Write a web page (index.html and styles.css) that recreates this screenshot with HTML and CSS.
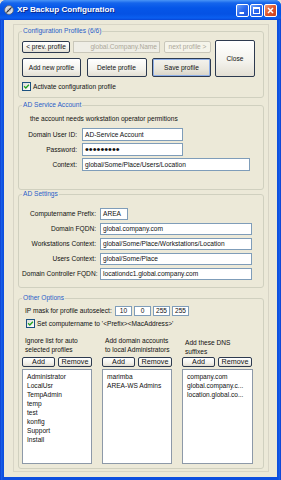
FILE: index.html
```html
<!DOCTYPE html>
<html lang="en">
    <head>
        <meta charset="UTF-8" />
        <title>XP Backup Configuration</title>
        <link rel="stylesheet" href="styles.css">
    </head>
    <body>
        <div class="window">
            <!-- title bar -->
            <div class="titlebar">
                <svg class="app-icon" viewBox="0 0 10 10" width="10" height="10">
                    <circle cx="5" cy="5" r="4.4" fill="#d9dbe0" stroke="#5d6470" stroke-width="0.8" />
                    <circle cx="5" cy="5" r="1.4" fill="#fff" stroke="#7b818c" stroke-width="0.5" />
                    <path d="M2.4 7.6 L7.6 2.4" stroke="#2b2f38" stroke-width="1.2" />
                </svg>
                <span class="title">XP Backup Configuration</span>
                <div class="caption-btns">
                    <span class="cap">
                        <svg viewBox="0 0 11 11" width="11" height="11"><rect x="2.5" y="7" width="4.5" height="2" fill="#fff" /></svg>
                    </span>
                    <span class="cap">
                        <svg viewBox="0 0 11 11" width="11" height="11"><rect x="2.5" y="2.5" width="6" height="6" fill="none" stroke="#fff" stroke-width="1" /><rect x="2" y="2" width="7" height="2" fill="#fff" /></svg>
                    </span>
                    <span class="cap cap-close">
                        <svg viewBox="0 0 11 11" width="11" height="11"><path d="M3 3 L8 8 M8 3 L3 8" stroke="#fff" stroke-width="1.5" /></svg>
                    </span>
                </div>
            </div>

            <div class="client">
                <div class="panel">
                    <!-- 프로필 -->
                    <fieldset class="group profiles">
                        <legend>Configuration Profiles (6/6)</legend>
                        <div class="profile-bar">
                            <div class="profile-rows">
                                <div class="profile-nav">
                                    <button class="btn btn-prev">&lt; prev. profile</button>
                                    <span class="field field-off">global.Company.Name</span>
                                    <button class="btn btn-next" disabled>next profile &gt;</button>
                                </div>
                                <div class="profile-actions">
                                    <button class="btn btn-add">Add new profile</button>
                                    <button class="btn btn-del">Delete profile</button>
                                    <button class="btn btn-save">Save profile</button>
                                </div>
                            </div>
                            <button class="btn btn-close">Close</button>
                        </div>
                        <label class="check check-profile">
                            <span class="check-box"><svg viewBox="0 0 7 7" width="7" height="7"><path d="M1.1 3.3 L2.8 5 L5.9 1.7" fill="none" stroke="#21a121" stroke-width="1.3" /></svg></span>
                            Activate configuration profile
                        </label>
                    </fieldset>

                    <!-- service account -->
                    <fieldset class="group account">
                        <legend>AD Service Account</legend>
                        <p class="note">the account needs workstation operator permitions</p>
                        <div class="form form-account">
                            <span class="form-label">Domain User ID:</span>
                            <span class="field w-short">AD-Service Account</span>
                            <span class="form-label">Password:</span>
                            <span class="field w-short pw">•••••••••</span>
                            <span class="form-label">Context:</span>
                            <span class="field w-ctx">global/Some/Place/Users/Location</span>
                        </div>
                    </fieldset>

                    <!-- ad settings -->
                    <fieldset class="group settings">
                        <legend>AD Settings</legend>
                        <div class="form form-settings">
                            <span class="form-label">Computername Prefix:</span>
                            <span class="field w-prefix">AREA</span>
                            <span class="form-label">Domain FQDN:</span>
                            <span class="field w-long">global.company.com</span>
                            <span class="form-label">Workstations Context:</span>
                            <span class="field w-long">global/Some/Place/Workstations/Location</span>
                            <span class="form-label">Users Context:</span>
                            <span class="field w-long">global/Some/Place</span>
                            <span class="form-label">Domain Controller FQDN:</span>
                            <span class="field w-long">locationdc1.global.company.com</span>
                        </div>
                    </fieldset>

                    <!-- other options -->
                    <fieldset class="group options">
                        <legend>Other Options</legend>
                        <div class="ip-row">
                            <span class="ip-label">IP mask for profile autoselect:</span>
                            <span class="field ip">10</span>
                            <span class="field ip">0</span>
                            <span class="field ip">255</span>
                            <span class="field ip">255</span>
                        </div>
                        <label class="check check-name">
                            <span class="check-box"><svg viewBox="0 0 7 7" width="7" height="7"><path d="M1.1 3.3 L2.8 5 L5.9 1.7" fill="none" stroke="#21a121" stroke-width="1.3" /></svg></span>
                            Set computername to '&lt;Prefix&gt;&lt;MacAddress&gt;'
                        </label>
                        <div class="lists">
                            <div class="list-col">
                                <p class="list-cap">Ignore list for auto<br>selected profiles</p>
                                <div class="list-btns">
                                    <button class="btn btn-sm">Add</button>
                                    <button class="btn btn-sm btn-rm">Remove</button>
                                </div>
                                <ul class="list">
                                    <li>Administrator</li>
                                    <li>LocalUsr</li>
                                    <li>TempAdmin</li>
                                    <li>temp</li>
                                    <li>test</li>
                                    <li>konfig</li>
                                    <li>Support</li>
                                    <li>Install</li>
                                </ul>
                            </div>
                            <div class="list-col">
                                <p class="list-cap">Add domain accounts<br>to local Administrators</p>
                                <div class="list-btns">
                                    <button class="btn btn-sm">Add</button>
                                    <button class="btn btn-sm btn-rm">Remove</button>
                                </div>
                                <ul class="list">
                                    <li>marimba</li>
                                    <li>AREA-WS Admins</li>
                                </ul>
                            </div>
                            <div class="list-col">
                                <p class="list-cap cap-low">Add these DNS<br>suffixes</p>
                                <div class="list-btns">
                                    <button class="btn btn-sm">Add</button>
                                    <button class="btn btn-sm btn-rm">Remove</button>
                                </div>
                                <ul class="list">
                                    <li>company.com</li>
                                    <li>global.company.c...</li>
                                    <li>location.global.co...</li>
                                </ul>
                            </div>
                        </div>
                    </fieldset>
                </div>
            </div>
        </div>
    </body>
</html>
```

FILE: styles.css
```css
* {
    box-sizing: border-box;
}
body {
    margin: 0;
    background: #e4e2da;
    font-family: "Liberation Sans", Arial, sans-serif;
    font-size: 6.6px;
    line-height: 8px;
    color: #111;
}
p,
ul {
    margin: 0;
    padding: 0;
}

/* 창 프레임 */
.window {
    width: 281px;
    height: 480px;
    display: flex;
    flex-direction: column;
    background: linear-gradient(90deg, #0a2fc4, #1a62ea 1px, #0d4fdf 3px, #0d4fdf 278px, #1a62ea 280px, #0a2fc4);
    border-radius: 6px 6px 0 0;
    overflow: hidden;
}
.titlebar {
    height: 20px;
    flex: none;
    display: flex;
    align-items: center;
    padding: 0 4px;
    background: linear-gradient(#4a95f6 0, #1565ec 3px, #0556e8 8px, #0552e4 14px, #0b5ff0 18px, #0746d6 20px);
}
.app-icon {
    margin-right: 3px;
    flex: none;
}
.title {
    flex: 1;
    color: #fff;
    font-weight: bold;
    font-size: 8.1px;
    text-shadow: 1px 1px #0d2a8a;
}
.caption-btns {
    display: flex;
    gap: 1px;
    margin-top: 1px;
}
.cap {
    width: 13px;
    height: 13px;
    border: 1px solid #fff;
    border-radius: 2px;
    background: linear-gradient(135deg, #6ea2f9, #2a68ee 50%, #1c55dc);
}
.cap svg {
    display: block;
}
.cap-close {
    background: linear-gradient(135deg, #f09a78, #e0562c 50%, #c8401a);
}

.client {
    flex: 1;
    margin: 0 4px 4px;
    background: #ece9d8;
    display: flex;
    flex-direction: column;
}
.panel {
    flex: 1;
    margin: 4px 8px 5px 9px;
    border: 1px solid #d8d5c6;
    padding: 2px 4px;
    display: flex;
    flex-direction: column;
}

/* 그룹박스 */
.group {
    margin: 0;
    padding: 0 3px;
    border: 1px solid #d0d0bf;
    border-radius: 3px;
    min-width: 0;
}
.group legend {
    padding: 0 1px;
    color: #2a5ec8;
    line-height: 8px;
}

/* 공통 버튼 */
.btn {
    font: inherit;
    line-height: 8px;
    padding: 0;
    margin: 0;
    color: #111;
    border: 1px solid #2d3a4f;
    border-radius: 2px;
    background: linear-gradient(#ffffff, #f3f2ec 60%, #e3dfd3);
    white-space: nowrap;
}
.btn:disabled {
    color: #aca899;
    border-color: #c9c7ba;
    background: #f5f4ea;
}
.field {
    display: block;
    height: 13px;
    line-height: 11px;
    padding: 0 2px;
    border: 1px solid #7f9db9;
    background: #fff;
    white-space: nowrap;
    overflow: hidden;
}

.profiles {
    padding-top: 5px;
    padding-bottom: 6px;
}
.profile-bar {
    display: flex;
    gap: 4px;
}
.profile-rows {
    display: flex;
    flex-direction: column;
    gap: 5px;
    padding-top: 1px;
}
.profile-nav {
    display: flex;
    height: 12px;
}
.btn-prev {
    width: 48px;
}
.field-off {
    width: 87px;
    height: 12px;
    margin: 0 4px 0 3px;
    text-align: right;
    color: #aca899;
    border-color: #c9c7ba;
    background: #efeee6;
    line-height: 10px;
}
.btn-next {
    width: 47px;
}
.profile-actions {
    display: flex;
    justify-content: space-between;
    height: 19px;
    width: 189px;
}
.btn-add,
.btn-save {
    width: 59px;
}
.btn-del {
    width: 60px;
}
.btn-save {
    box-shadow: inset 0 0 0 1px #8fb0e8;
    background: linear-gradient(#f4f3ee, #e8e6dc 60%, #d8d3c6);
}
.btn-close {
    width: 40px;
    height: 37px;
}

/* 체크박스 */
.check {
    display: flex;
    align-items: center;
    gap: 2px;
    height: 9px;
    white-space: nowrap;
}
.check-box {
    width: 9px;
    height: 9px;
    flex: none;
    border: 1px solid #1c5180;
    background: linear-gradient(135deg, #dcdcd7, #fff);
}
.check-box svg {
    display: block;
}
.check-profile {
    margin-top: 5px;
}

/* 폼 */
.account {
    margin-top: 3px;
    padding-top: 6px;
    padding-bottom: 18px;
}
.note {
    margin-left: 8px;
}
.form {
    display: grid;
    align-items: center;
}
.form-label {
    text-align: right;
    white-space: nowrap;
}
.form-account {
    margin-top: 5px;
    grid-template-columns: 55px 1fr;
    column-gap: 5px;
    row-gap: 2px;
}
.w-short {
    width: 101px;
}
.w-ctx {
    width: 168px;
}
.pw {
    font-size: 11px;
    letter-spacing: 0;
}

.settings {
    padding-top: 10px;
    padding-bottom: 7px;
}
.form-settings {
    grid-template-columns: 74px 1fr;
    column-gap: 4px;
    row-gap: 3px;
}
.form-settings .field {
    height: 12px;
    line-height: 10px;
}
.w-prefix {
    width: 28px;
}
.w-long {
    width: 152px;
}

/* 기타 옵션 */
.options {
    margin-top: 6px;
    padding-top: 4px;
    padding-bottom: 4px;
}
.ip-row {
    display: flex;
    align-items: center;
    gap: 2px;
}
.ip-label {
    width: 88px;
    margin-left: 3px;
    white-space: nowrap;
}
.field.ip {
    width: 17px;
    height: 10px;
    line-height: 8px;
    padding: 0;
    text-align: center;
}
.check-name {
    margin: 3px 0 0 4px;
}
.lists {
    margin-top: 8px;
    display: grid;
    grid-template-columns: 70px 70px 71px;
    column-gap: 10px;
}
.list-cap {
    height: 18px;
    line-height: 9px;
    padding-left: 3px;
    white-space: nowrap;
}
.cap-low {
    padding-top: 2px;
}
.list-btns {
    display: flex;
    gap: 3px;
    margin-top: 3px;
}
.btn-sm {
    width: 33px;
    height: 10px;
    font-size: 7.2px;
}
.btn-rm {
    width: 34px;
}
.list {
    list-style: none;
    margin-top: 2px;
    height: 95px;
    padding: 2px 4px;
    border: 1px solid #8d99a8;
    background: #fff;
    line-height: 9px;
    overflow: hidden;
}
.list li {
    white-space: nowrap;
}
```
